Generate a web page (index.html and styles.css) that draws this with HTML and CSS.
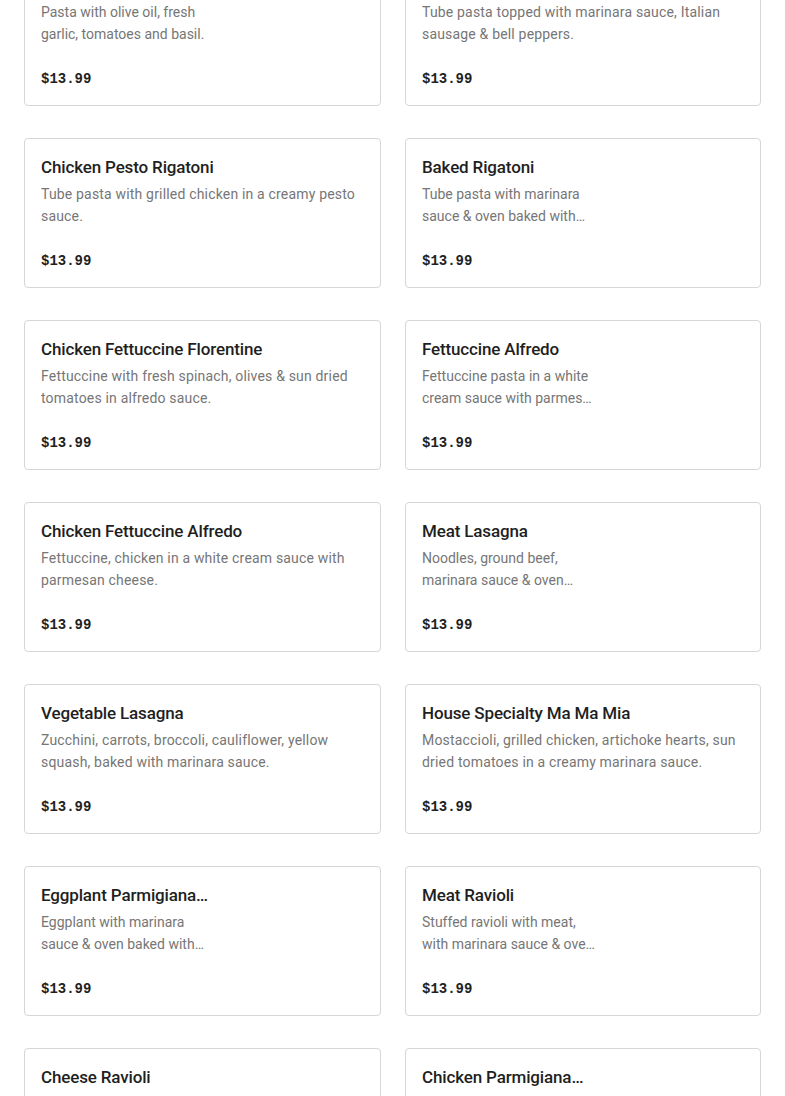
FILE: index.html
```html
<!DOCTYPE html>
<html lang="en">
<head>
<meta charset="utf-8">
<title>Pasta Menu</title>
<link rel="stylesheet" href="styles.css">
</head>
<body>
<main class="menu">
  <div class="card">
    <h3 class="title short">Spaghetti Aglio e Olio</h3>
    <p class="desc short">Pasta with olive oil, fresh garlic, tomatoes and basil.</p>
    <div class="price">$13.99</div>
  </div>
  <div class="card">
    <h3 class="title">Rigatoni Sausage</h3>
    <p class="desc">Tube pasta topped with marinara sauce, Italian sausage &amp; bell peppers.</p>
    <div class="price">$13.99</div>
  </div>

  <div class="card">
    <h3 class="title">Chicken Pesto Rigatoni</h3>
    <p class="desc">Tube pasta with grilled chicken in a creamy pesto sauce.</p>
    <div class="price">$13.99</div>
  </div>
  <div class="card">
    <h3 class="title short">Baked Rigatoni</h3>
    <p class="desc short">Tube pasta with marinara sauce &amp; oven baked with mozzarella cheese.</p>
    <div class="price">$13.99</div>
  </div>

  <div class="card">
    <h3 class="title">Chicken Fettuccine Florentine</h3>
    <p class="desc">Fettuccine with fresh spinach, olives &amp; sun dried tomatoes in alfredo sauce.</p>
    <div class="price">$13.99</div>
  </div>
  <div class="card">
    <h3 class="title short">Fettuccine Alfredo</h3>
    <p class="desc short">Fettuccine pasta in a white cream sauce with parmesan cheese.</p>
    <div class="price">$13.99</div>
  </div>

  <div class="card">
    <h3 class="title">Chicken Fettuccine Alfredo</h3>
    <p class="desc">Fettuccine, chicken in a white cream sauce with parmesan cheese.</p>
    <div class="price">$13.99</div>
  </div>
  <div class="card">
    <h3 class="title short">Meat Lasagna</h3>
    <p class="desc short">Noodles, ground beef, marinara sauce &amp; oven baked with mozzarella cheese.</p>
    <div class="price">$13.99</div>
  </div>

  <div class="card">
    <h3 class="title">Vegetable Lasagna</h3>
    <p class="desc">Zucchini, carrots, broccoli, cauliflower, yellow squash, baked with marinara sauce.</p>
    <div class="price">$13.99</div>
  </div>
  <div class="card">
    <h3 class="title">House Specialty Ma Ma Mia</h3>
    <p class="desc">Mostaccioli, grilled chicken, artichoke hearts, sun dried tomatoes in a creamy marinara sauce.</p>
    <div class="price">$13.99</div>
  </div>

  <div class="card">
    <h3 class="title short">Eggplant Parmigiana—Dinner</h3>
    <p class="desc short">Eggplant with marinara sauce &amp; oven baked with mozzarella cheese.</p>
    <div class="price">$13.99</div>
  </div>
  <div class="card">
    <h3 class="title short">Meat Ravioli</h3>
    <p class="desc short">Stuffed ravioli with meat, with marinara sauce &amp; oven baked with mozzarella.</p>
    <div class="price">$13.99</div>
  </div>

  <div class="card">
    <h3 class="title short">Cheese Ravioli</h3>
    <p class="desc short">Stuffed ravioli with cheese, with marinara sauce &amp; oven baked with mozzarella.</p>
    <div class="price">$13.99</div>
  </div>
  <div class="card">
    <h3 class="title short">Chicken Parmigiana—Dinner</h3>
    <p class="desc short">Breaded chicken breast with marinara sauce &amp; oven baked with mozzarella.</p>
    <div class="price">$13.99</div>
  </div>
</main>
</body>
</html>
```

FILE: styles.css
```css
html, body {
  margin: 0;
  padding: 0;
  background: #ffffff;
}

body {
  font-family: Roboto, "Liberation Sans", Arial, sans-serif;
  color: #191919;
  overflow: hidden;
}

.menu {
  display: grid;
  grid-template-columns: 357px 356px;
  column-gap: 24px;
  row-gap: 32px;
  padding: 0 24px;
  margin-top: -44px;
}

.card {
  box-sizing: border-box;
  height: 150px;
  border: 1px solid #d6d6d6;
  border-radius: 4px;
  padding: 16px;
  display: flex;
  flex-direction: column;
}

.title {
  margin: 0;
  font-size: 17px;
  line-height: 24px;
  font-weight: 500;
  letter-spacing: -0.15px;
  color: #1f1f1f;
  white-space: nowrap;
  overflow: hidden;
  text-overflow: ellipsis;
}

.title.short {
  max-width: 170px;
}

.desc {
  margin: 4px 0 0 0;
  font-size: 14px;
  line-height: 22px;
  letter-spacing: 0.18px;
  color: #767676;
  display: -webkit-box;
  -webkit-box-orient: vertical;
  -webkit-line-clamp: 2;
  overflow: hidden;
}

.desc.short {
  max-width: 176px;
  letter-spacing: 0;
}

.price {
  margin-top: auto;
  font-family: "Liberation Mono", "DejaVu Sans Mono", monospace;
  font-size: 14px;
  line-height: 20px;
  font-weight: 700;
  color: #1f1f1f;
}
```
